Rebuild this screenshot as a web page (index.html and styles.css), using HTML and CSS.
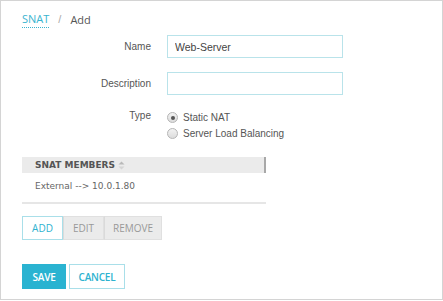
FILE: index.html
```html
<!DOCTYPE html>
<html lang="en">
<head>
    <meta charset="UTF-8">
    <title>SNAT / Add</title>
    <link rel="stylesheet" href="styles.css">
</head>
<body>
<div class="frame">
    <div class="crumbs">
        <a class="crumb-link" href="#">SNAT</a>
        <span class="crumb-sep">/</span>
        <span class="crumb-cur">Add</span>
    </div>

    <div class="form">
        <label class="lbl">Name</label>
        <input class="field" type="text" value="Web-Server">

        <label class="lbl">Description</label>
        <input class="field" type="text" value="">

        <label class="lbl lbl-type">Type</label>
        <div class="radios">
            <label class="radio"><span class="dot on"></span>Static NAT</label>
            <label class="radio"><span class="dot"></span>Server Load Balancing</label>
        </div>
    </div>

    <div class="members">
        <div class="members-head">
            SNAT MEMBERS
            <svg class="sort" width="7" height="9" viewBox="0 0 7 9">
                <path d="M3.5 0.5 L6.5 3.5 L0.5 3.5 Z" fill="#b9b9b9"/>
                <path d="M3.5 8.5 L6.5 5.5 L0.5 5.5 Z" fill="#d4d4d4"/>
            </svg>
        </div>
        <div class="members-row">External --&gt; 10.0.1.80</div>
    </div>

    <div class="tools">
        <button class="tool active">ADD</button>
        <button class="tool tool-edit">EDIT</button>
        <button class="tool tool-remove">REMOVE</button>
    </div>

    <div class="actions">
        <button class="btn-save">SAVE</button>
        <button class="btn-cancel">CANCEL</button>
    </div>
</div>
</body>
</html>
```

FILE: styles.css
```css
body {
    margin: 0;
    background: #ffffff;
}

.frame {
    width: 443px;
    height: 300px;
    box-sizing: border-box;
    border: 1px solid #d4d4d4;
    padding: 10px 0 0 21px;
    font-family: "Liberation Sans", Arial, sans-serif;
    font-size: 10px;
    color: #555;
}

/* breadcrumb */
.crumbs {
    display: flex;
    align-items: center;
    height: 16px;
    gap: 9px;
}

.crumb-link {
    color: #3ab4cf;
    text-decoration: none;
    font-family: "Open Sans", sans-serif;
    font-size: 11px;
    border-bottom: 1px dotted #3ab4cf;
    padding-bottom: 1px;
}

.crumb-sep {
    color: #aaa;
    font-size: 11px;
}

.crumb-cur {
    color: #555;
    font-family: "Open Sans", sans-serif;
    font-size: 11px;
}

/* form */
.form {
    display: grid;
    grid-template-columns: 129px 176px;
    column-gap: 16px;
    row-gap: 14px;
    margin-top: 8px;
    align-items: center;
}

.lbl {
    text-align: right;
    color: #555;
}

.lbl-type {
    align-self: start;
    padding-top: 1px;
}

.field {
    width: 176px;
    height: 23px;
    box-sizing: border-box;
    border: 1px solid #b9e3ea;
    padding: 0 7px;
    font-family: "Liberation Sans", Arial, sans-serif;
    font-size: 10.5px;
    color: #444;
    outline: none;
}

.radios {
    display: flex;
    flex-direction: column;
    gap: 3px;
    margin-top: 2px;
}

.radio {
    display: flex;
    align-items: center;
    gap: 5px;
    height: 13px;
    color: #555;
}

.dot {
    width: 9px;
    height: 9px;
    border-radius: 50%;
    border: 1px solid #b5b5b5;
    background: linear-gradient(#f2f2f2, #dcdcdc);
    position: relative;
}

.dot.on::after {
    content: "";
    position: absolute;
    left: 2.5px;
    top: 2.5px;
    width: 4px;
    height: 4px;
    border-radius: 50%;
    background: #555;
}

/* members table */
.members {
    width: 244px;
    margin-top: 17px;
    border-bottom: 2px solid #e6e6e6;
    font-family: "DejaVu Sans", Verdana, sans-serif;
    font-size: 9px;
}

.members-head {
    height: 16px;
    background: #ebebeb;
    border-right: 2px solid #a8a8a8;
    display: flex;
    align-items: center;
    padding-left: 13px;
    font-weight: bold;
    color: #555;
    gap: 3px;
}

.members-row {
    height: 29px;
    line-height: 26px;
    padding-left: 13px;
    color: #666;
}

/* toolbar */
.tools {
    display: flex;
    margin-top: 12px;
}

.tool {
    height: 24px;
    border: 1px solid #e0e0e0;
    background: #ebebeb;
    color: #999;
    font-family: "Open Sans", sans-serif;
    font-size: 10px;
    padding: 0;
    margin: 0;
}

.tool + .tool {
    border-left: 1px solid #dadada;
}

.tool.active {
    background: #fff;
    border-color: #a9dfe9;
    color: #2eb2cf;
    width: 41px;
}

.tool-edit {
    width: 41px;
}

.tool-remove {
    width: 58px;
}

/* save / cancel */
.actions {
    display: flex;
    gap: 3px;
    margin-top: 24px;
}

.btn-save,
.btn-cancel {
    height: 25px;
    font-family: "Open Sans", sans-serif;
    font-size: 10px;
    font-weight: 600;
    letter-spacing: -0.2px;
    margin: 0;
}

.btn-save {
    width: 44px;
    background: #2ab3d1;
    border: 1px solid #2ab3d1;
    color: #fff;
}

.btn-cancel {
    width: 56px;
    background: #fff;
    border: 1px solid #a9dfe9;
    color: #2eb2cf;
}
```
